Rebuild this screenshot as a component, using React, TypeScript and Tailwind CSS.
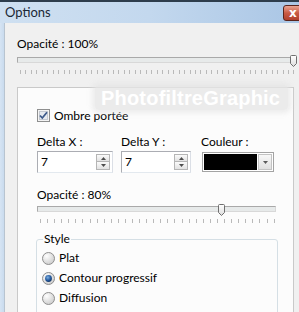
const Ticks = ({ n }: { n: number }) => (
  <div className="flex justify-between h-[4px]">
    {Array.from({ length: n }).map((_, i) => (
      <div key={i} className="w-px h-full bg-[#b9b9b9]" />
    ))}
  </div>
);

const Thumb = () => (
  <svg width="7" height="12" viewBox="0 0 7 12">
    <defs>
      <linearGradient id="th" x1="0" y1="0" x2="0" y2="1">
        <stop offset="0" stopColor="#ffffff" />
        <stop offset="1" stopColor="#dcdcdc" />
      </linearGradient>
    </defs>
    <path d="M0.5 1.5 Q0.5 0.5 1.5 0.5 H5.5 Q6.5 0.5 6.5 1.5 V8.5 L3.5 11.5 L0.5 8.5 Z" fill="url(#th)" stroke="#6f6f6f" />
  </svg>
);

const Slider = ({ thumb, ticks, tickPad }: { thumb: string; ticks: number; tickPad: string }) => (
  <div className="relative">
    <div className="h-[6px] border border-[#a9a9a9] border-r-[#d8d8d8] border-b-[#d8d8d8] bg-[#e7eaea]" />
    <div className={`absolute top-[-2px] ${thumb}`}>
      <Thumb />
    </div>
    <div className={`mt-[7px] ${tickPad}`}>
      <Ticks n={ticks} />
    </div>
  </div>
);

const Spinner = () => (
  <div className="flex flex-col gap-0 mr-[2px]">
    <div className="w-[14px] h-[8px] border border-[#b5b5b5] bg-gradient-to-b from-[#fafafa] to-[#e2e2e2] flex items-center justify-center">
      <svg width="5" height="3"><path d="M0 3 L2.5 0 L5 3 Z" fill="#4d4d4d" /></svg>
    </div>
    <div className="w-[14px] h-[8px] border border-t-0 border-[#b5b5b5] bg-gradient-to-b from-[#fafafa] to-[#e2e2e2] flex items-center justify-center">
      <svg width="5" height="3"><path d="M0 0 L5 0 L2.5 3 Z" fill="#4d4d4d" /></svg>
    </div>
  </div>
);

const NumInput = ({ w }: { w: string }) => (
  <div className={`flex items-center justify-between h-[22px] border border-[#abadb3] border-b-[#e3e9ef] border-r-[#dbdfe6] bg-white ${w}`}>
    <span className="pl-[3px] text-[12px] text-black">7</span>
    <Spinner />
  </div>
);

const Radio = ({ on }: { on?: boolean }) => (
  <svg width="13" height="13" viewBox="0 0 13 13">
    <defs>
      <radialGradient id="rg" cx="0.35" cy="0.3" r="0.8">
        <stop offset="0" stopColor="#ffffff" />
        <stop offset="1" stopColor="#c8c8c8" />
      </radialGradient>
      <radialGradient id="rb" cx="0.4" cy="0.35" r="0.7">
        <stop offset="0" stopColor="#7fb0e0" />
        <stop offset="0.6" stopColor="#245aa0" />
        <stop offset="1" stopColor="#102f5c" />
      </radialGradient>
    </defs>
    <circle cx="6.5" cy="6.5" r="6" fill="url(#rg)" stroke="#8f8f8f" />
    {on && <circle cx="6.5" cy="6.5" r="3.4" fill="url(#rb)" />}
  </svg>
);

const Check = () => (
  <svg width="13" height="13" viewBox="0 0 13 13">
    <rect x="0.5" y="0.5" width="12" height="12" fill="#f4f4f4" stroke="#8e8f8f" />
    <rect x="2.5" y="2.5" width="8" height="8" fill="#e6eaf0" stroke="#c4c9d1" />
    <path d="M3 6.5 L5.3 9 L10 3.3" fill="none" stroke="#3d5a8a" strokeWidth="1.8" />
  </svg>
);

export default function App() {
  return (
    <div className="w-[299px] h-[312px] overflow-hidden flex flex-col bg-[#f0f0f0] font-['Lato','Noto_Sans',sans-serif] text-[12px] text-black">
      <div className="h-[23px] shrink-0 flex items-center border-t-2 border-[#2e3d4c] bg-gradient-to-r from-[#cfe0f1] via-[#c3d8ee] to-[#aac6e5]">
        <span className="pl-[5px] text-[13px] text-[#1b2836] leading-none">Options</span>
        <div className="ml-auto -mr-[6px] w-[22px] h-[16px] rounded-[3px] border border-[#5a241d] bg-gradient-to-b from-[#e9a493] via-[#c95a45] to-[#b03f2c] flex items-center pl-[5px]">
          <span className="text-white font-bold text-[12px] leading-none font-['DejaVu_Sans',sans-serif]">x</span>
        </div>
      </div>
      <div className="flex flex-1">
        <div className="w-[5px] shrink-0 bg-gradient-to-r from-[#d6e4f3] to-[#c9dbee] border-r border-[#b8c4d0]" />
        <div className="flex-1 pl-[12px] pr-[3px] pt-[13px] flex flex-col">
          <div className="leading-[16px]">Opacité : 100%</div>
          <div className="mt-[5px]">
            <Slider thumb="left-[273px]" ticks={51} tickPad="pl-[3px] pr-[1px]" />
          </div>
          <div className="relative mt-[13px] w-[277px] flex-1 border border-[#c9c9c9] bg-[#fcfcfc] pl-[19px] pr-[15px] pt-[21px]">
            <div className="absolute left-[77px] top-[-3px] w-[193px] h-[25px] rounded-[4px] bg-[#e6e6e6]/75 shadow-[0_0_5px_3px_rgba(230,230,230,0.7)] flex items-center pl-[6px]">
              <span className="font-['Liberation_Sans',sans-serif] font-bold text-[20px] leading-none text-white tracking-[0.2px]">PhotofiltreGraphic</span>
            </div>
            <div className="flex items-center gap-[4px] h-[13px]">
              <Check />
              <span className="leading-[16px]">Ombre portée</span>
            </div>
            <div className="flex mt-[12px]">
              <div className="flex flex-col">
                <span className="leading-[16px]">Delta X :</span>
                <div className="mt-[1px]"><NumInput w="w-[76px]" /></div>
              </div>
              <div className="flex flex-col ml-[8px]">
                <span className="leading-[16px]">Delta Y :</span>
                <div className="mt-[1px]"><NumInput w="w-[70px]" /></div>
              </div>
              <div className="flex flex-col ml-[10px]">
                <span className="leading-[16px]">Couleur :</span>
                <div className="mt-[2px] ml-[1px] w-[72px] h-[20px] border border-[#a3a3a3] bg-white p-[1px] flex gap-[1px]">
                  <div className="flex-1 bg-black" />
                  <div className="w-[14px] border border-[#c3c3c3] bg-gradient-to-b from-[#f8f8f8] to-[#e0e0e0] flex items-center justify-center">
                    <svg width="5" height="3"><path d="M0 0 L5 0 L2.5 3 Z" fill="#5a5a5a" /></svg>
                  </div>
                </div>
              </div>
            </div>
            <div className="mt-[14px] leading-[16px]">Opacité : 80%</div>
            <div className="mt-[3px] w-[239px]">
              <Slider thumb="left-[181px]" ticks={34} tickPad="pl-[3px] pr-[1px]" />
            </div>
            <fieldset className="mt-[8px] w-[242px] -ml-[1px] border border-[#d5dfe5] rounded-[3px] pl-[5px] pb-[20px]">
              <legend className="px-[1px] ml-[1px] leading-[16px]">Style</legend>
              <div className="flex flex-col gap-[4px] pt-[3px]">
                <div className="flex items-center gap-[4px] h-[16px]"><Radio /><span>Plat</span></div>
                <div className="flex items-center gap-[4px] h-[16px]"><Radio on /><span>Contour progressif</span></div>
                <div className="flex items-center gap-[4px] h-[16px]"><Radio /><span>Diffusion</span></div>
              </div>
            </fieldset>
          </div>
        </div>
      </div>
    </div>
  );
}
